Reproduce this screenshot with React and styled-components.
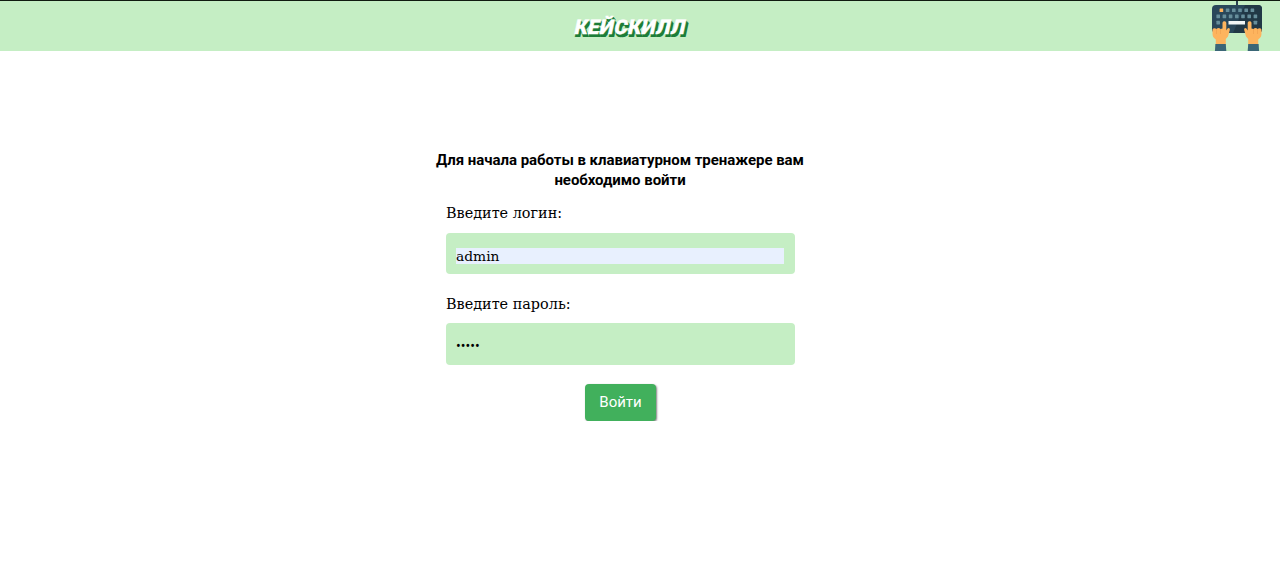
import React from "react";
import styled, { createGlobalStyle } from "styled-components";

const GlobalStyle = createGlobalStyle`
  * { box-sizing: border-box; }
  body { margin: 0; background: #fff; color: #000; overflow: hidden; }
`;

const Header = styled.header`
  display: grid;
  grid-template-columns: 50px 1fr 50px;
  align-items: center;
  height: 51px;
  padding: 0 18px;
  border-top: 1px solid #101a10;
  background: #c5eec4;
`;

const Logo = styled.div`
  grid-column: 2;
  justify-self: center;
  margin: 2px 18px 0 0;
  font: 900 20px/24px Roboto, "Liberation Sans", sans-serif;
  letter-spacing: 0.6px;
  color: #fff;
  -webkit-text-stroke: 0.4px #fff;
  transform: skewX(-12deg);
  text-shadow: 1px 1px 0 #1d7d38, 2px 2px 0 #1d7d38, 3px 3px 0 #1d7d38,
    1px 3px 0 #1d7d38;
`;

const Keyboard = styled.svg`
  display: block;
  width: 50px;
  height: 50px;
`;

const Main = styled.main`
  display: flex;
  flex-direction: column;
  align-items: center;
  padding: 99px 40px 0 0;
`;

const Title = styled.h1`
  width: 380px;
  margin: 0;
  text-align: center;
  font: 700 15px/20px Roboto, sans-serif;
  letter-spacing: -0.04px;
`;

const Form = styled.form`
  display: flex;
  flex-direction: column;
  width: 349px;
  margin-left: 1px;
`;

const Label = styled.label`
  height: 20px;
  margin-top: ${(p) => p.$top}px;
  font: 14.4px/20px "DejaVu Serif", serif;
  white-space: nowrap;
`;

const Field = styled.div`
  display: flex;
  height: ${(p) => p.$height}px;
  margin-top: ${(p) => p.$top}px;
  padding: 15px 11px 10px 10px;
  border-radius: 4px;
  background: #c5eec4;
`;

const Input = styled.input`
  width: 100%;
  height: 16px;
  padding: 0;
  border: 0;
  outline: 0;
  background: ${(p) => (p.$filled ? "#e8f0fe" : "transparent")};
  color: #000;
  font: 13.8px/16px "DejaVu Serif", serif;
`;

const Dots = styled(Input)`
  font: 14px/16px Roboto, sans-serif;
`;

const Button = styled.button`
  align-self: center;
  width: 71px;
  height: 37px;
  margin-top: 19px;
  padding: 0;
  border: 0;
  border-radius: 4px;
  background: #41b05c;
  color: #fff;
  font: 15px/37px Roboto, sans-serif;
  box-shadow: 1px 1px 2px rgba(0, 0, 0, 0.5);
`;

const keyRows = [
  { y: 7.5, xs: [7.6, 13.8, 20, 26.2, 32.4, 38.6] },
  { y: 13.6, xs: [4.4, 10.6, 16.8, 23, 29.2, 35.4, 41.6] },
  { y: 19.8, xs: [4.4, 41.6] },
];

function Hand() {
  return (
    <>
      <path
        d="M.5 29c0-2 2.800-2.200 4-1 1-1.200 3-1.200 4 0l2-.5V22c0-2.400 3.800-2.400 3.800 0v7.500l1.200-2c1.200-1.200 2.700-.4 2.300 1.500L16 35.500 13.800 38v5.500H3.800V38.500C1 36.500.5 35 .5 32Z"
        fill="#fdb45e"
      />
      <path d="M4.500 28v5M8.500 28v5" stroke="#ef9d4d" strokeWidth=".6" />
      <path d="M3.400 43h10.400l.5 7H2.900Z" fill="#3b6677" />
    </>
  );
}

function KeyboardIcon() {
  return (
    <Keyboard viewBox="0 0 50 50" aria-hidden="true">
      <path d="M24 0h2v5h-2z" fill="#29404f" />
      <rect x="0" y="4" width="50" height="28" rx="4" fill="#29475a" />
      <path d="M33 4h13a4 4 0 0 1 4 4v20a4 4 0 0 1-4 4H21Z" fill="#213846" />
      {keyRows.map((row, r) =>
        row.xs.map((x, i) => (
          <rect
            key={`${r}-${i}`}
            x={x}
            y={row.y}
            width="3.6"
            height="3.6"
            rx=".4"
            fill={r === 0 && i === 0 ? "#ffb25c" : "#668e9b"}
          />
        ))
      )}
      <rect x="16.500" y="20" width="16.500" height="3.500" fill="#f0f5f5" />
      <Hand />
      <g transform="translate(50 0) scale(-1 1)">
        <Hand />
      </g>
    </Keyboard>
  );
}

export default function App() {
  return (
    <>
      <GlobalStyle />
      <Header>
        <Logo>КЕЙСКИЛЛ</Logo>
        <KeyboardIcon />
      </Header>
      <Main>
        <Title>Для начала работы в клавиатурном тренажере вам необходимо войти</Title>
        <Form onSubmit={(e) => e.preventDefault()}>
          <Label $top={13} htmlFor="login">Введите логин:</Label>
          <Field $top={10} $height={41}>
            <Input id="login" $filled defaultValue="admin" />
          </Field>
          <Label $top={20} htmlFor="password">Введите пароль:</Label>
          <Field $top={9} $height={42}>
            <Dots id="password" type="password" defaultValue="admin" />
          </Field>
          <Button type="submit">Войти</Button>
        </Form>
      </Main>
    </>
  );
}
